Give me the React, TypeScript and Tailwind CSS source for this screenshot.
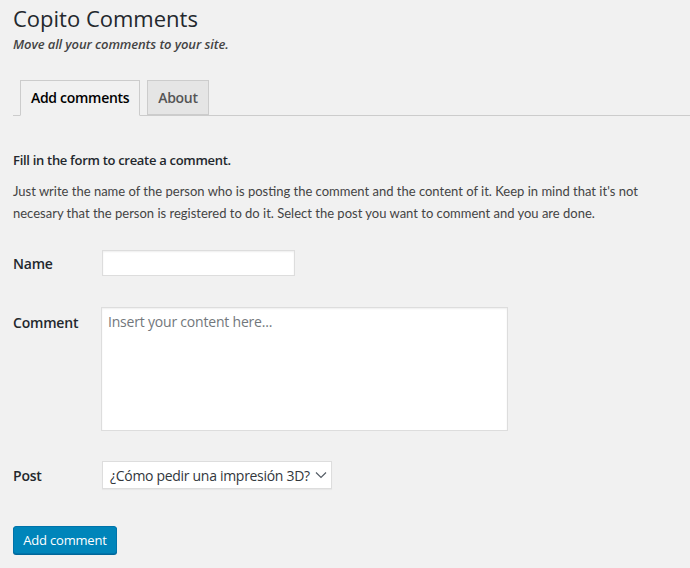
import React from "react";

function Chevron() {
  return (
    <svg width="12" height="8" viewBox="0 0 12 8" fill="none" stroke="#555d66" strokeWidth="1.2">
      <path d="M1 1.5 L6 6.5 L11 1.5" />
    </svg>
  );
}

export default function App() {
  return (
    <div className="min-h-[568px] w-full bg-[#f1f1f1] text-[#444] font-['Open_Sans','Noto_Sans',sans-serif] overflow-hidden">
      <div className="pl-[13px] pt-[4px]">
        <h1 className="text-[22px] leading-[29px] font-normal text-[#23282d]">Copito Comments</h1>
        <p className="mt-[1px] text-[13px] leading-[20px] italic font-semibold tracking-[-0.1px] text-[#444]">
          Move all your comments to your site.
        </p>
        <nav className="mt-[26px] flex border-b border-[#ccc] h-[36px]">
          <div className="ml-[7px] h-[36px] px-[10px] border border-[#ccc] border-b-[#f1f1f1] bg-[#f1f1f1] text-[14px] leading-[33px] font-semibold tracking-[-0.3px] text-[#000]">
            Add comments
          </div>
          <div className="ml-[7px] h-[35px] px-[10px] border border-[#ccc] bg-[#e5e5e5] text-[14px] leading-[33px] font-semibold tracking-[-0.3px] text-[#555]">
            About
          </div>
        </nav>
        <div className="pr-[20px]">
          <p className="mt-[34px] text-[13px] leading-[20px] font-semibold tracking-[-0.3px] text-[#23282d]">
            Fill in the form to create a comment.
          </p>
          <p className="mt-[10px] text-[13px] leading-[22px] text-[#444] font-['Lato',sans-serif] whitespace-nowrap">
            Just write the name of the person who is posting the comment and the content of it. Keep in mind that it's not
            <br />
            necesary that the person is registered to do it. Select the post you want to comment and you are done.
          </p>
          <div className="mt-[26px] flex items-center">
            <label className="w-[89px] text-[14px] font-semibold tracking-[-0.2px] text-[#23282d]">Name</label>
            <input
              type="text"
              className="w-[193px] h-[26px] bg-white border border-[#ddd] shadow-[inset_0_1px_2px_rgba(0,0,0,0.07)] outline-none"
            />
          </div>
          <div className="mt-[31px] flex items-start">
            <label className="w-[88px] pt-[5px] text-[14px] font-semibold tracking-[-0.2px] text-[#23282d]">Comment</label>
            <textarea
              placeholder="Insert your content here..."
              className="w-[407px] h-[124px] bg-white border border-[#ddd] shadow-[inset_0_1px_2px_rgba(0,0,0,0.07)] px-[6px] py-[4px] text-[14px] leading-[20px] tracking-[-0.2px] text-[#32373c] placeholder:text-[#72777c] resize-none outline-none"
            />
          </div>
          <div className="mt-[30px] flex items-center">
            <label className="w-[89px] text-[14px] font-semibold tracking-[-0.2px] text-[#23282d]">Post</label>
            <div className="h-[28px] bg-white border border-[#ddd] shadow-[0_1px_1px_rgba(0,0,0,0.04)] flex items-center pl-[7px] pr-[4px] text-[14px] tracking-[-0.3px] text-[#32373c] whitespace-nowrap">
              <span>¿Cómo pedir una impresión 3D?</span>
              <span className="ml-[5px] flex items-center"><Chevron /></span>
            </div>
          </div>
          <button className="mt-[37px] h-[28px] w-[104px] rounded-[3px] bg-[#0085ba] border border-[#0073aa] shadow-[0_1px_0_#006799] text-white text-[13px] leading-[26px] tracking-[-0.2px]">
            Add comment
          </button>
        </div>
      </div>
    </div>
  );
}
